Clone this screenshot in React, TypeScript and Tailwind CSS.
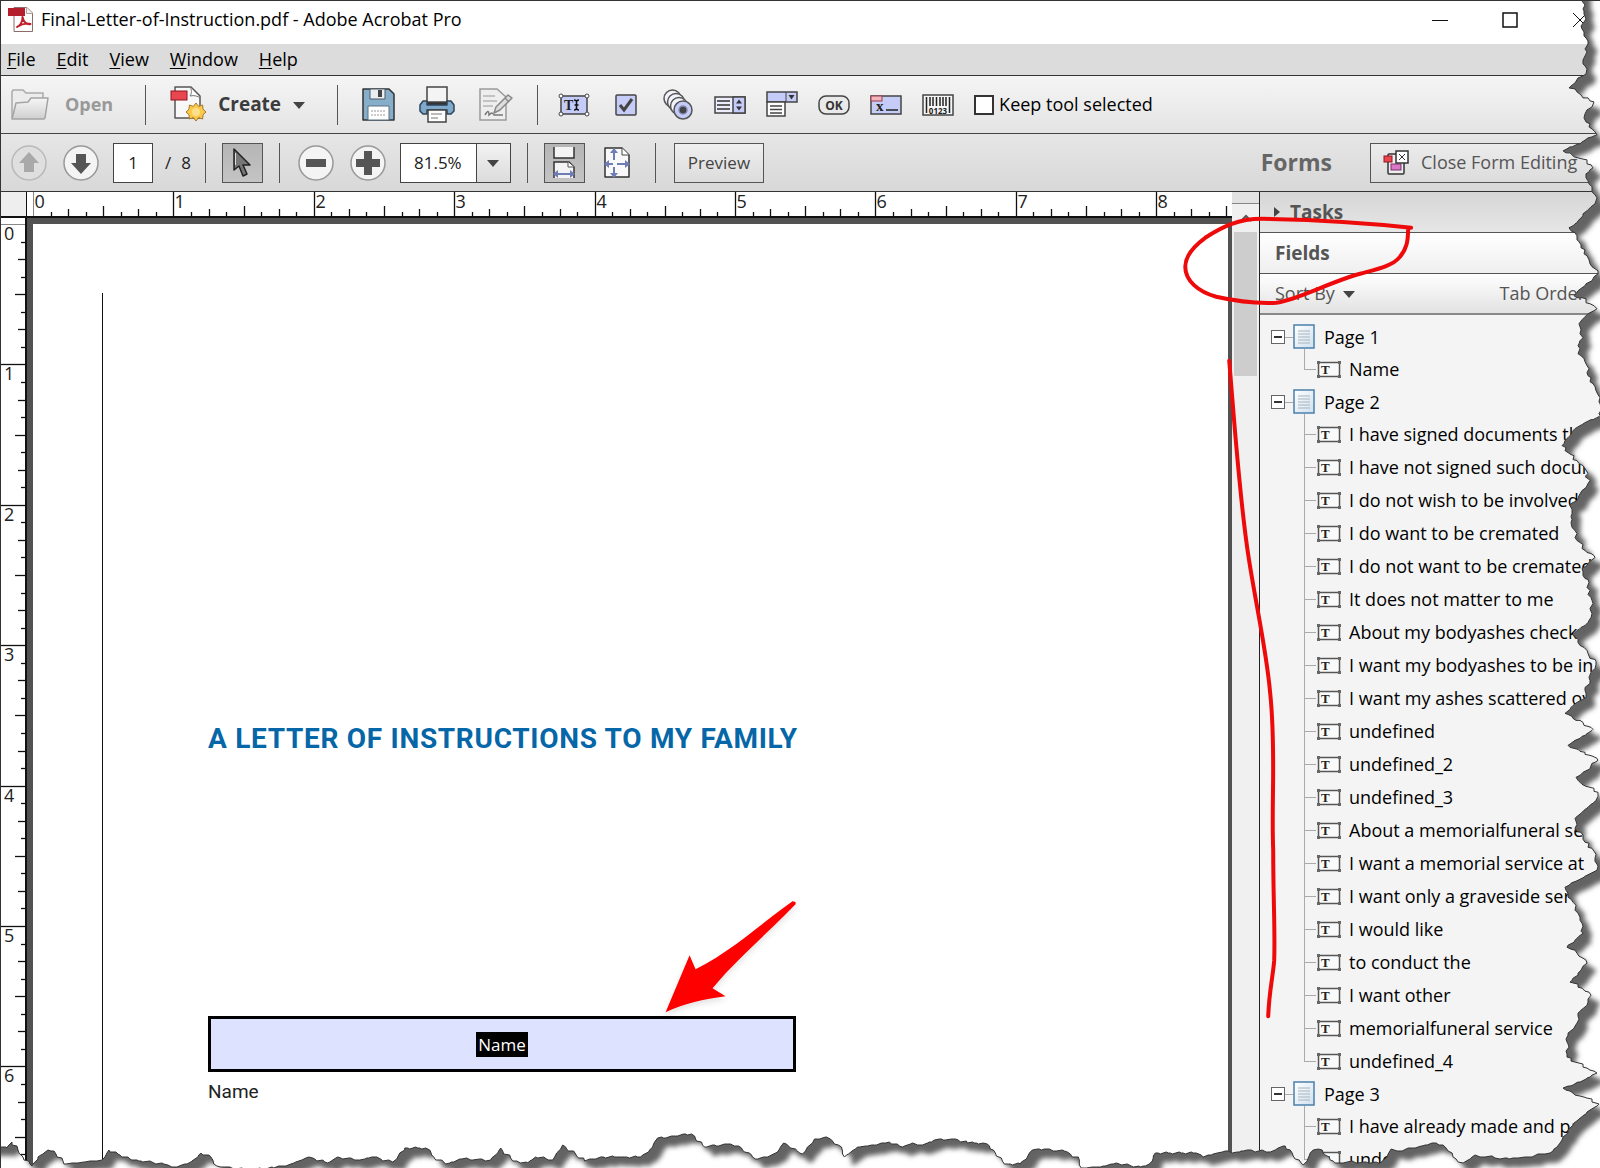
import { useState } from "react";
import type { ReactNode } from "react";

const PAGE_COUNT = 8;
const INCH = 140.4;

const menus = ["File", "Edit", "View", "Window", "Help"];

const fieldTree = [
  { page: "Page 1", fields: ["Name"] },
  {
    page: "Page 2",
    fields: [
      "I have signed documents that",
      "I have not signed such docum",
      "I do not wish to be involved",
      "I do want to be cremated",
      "I do not want to be cremated",
      "It does not matter to me",
      "About my bodyashes check",
      "I want my bodyashes to be in",
      "I want my ashes scattered ov",
      "undefined",
      "undefined_2",
      "undefined_3",
      "About a memorialfuneral ser",
      "I want a memorial service at",
      "I want only a graveside serv",
      "I would like",
      "to conduct the",
      "I want other",
      "memorialfuneral service",
      "undefined_4",
    ],
  },
  { page: "Page 3", fields: ["I have already made and pa", "undefined_5"] },
];

/* ---------- icons ---------- */

function PdfIcon() {
  return (
    <svg width="26" height="27" viewBox="0 0 26 27">
      <path d="M6 1.5h13l5.500 5.500v18.500H6z" fill="#fff" stroke="#8d6b6b" />
      <path d="M18.500 1.500v6h6" fill="#eee" stroke="#b0a0a0" />
      <path d="M0 2h17v8H0z" fill="#b3202c" />
      <path d="M9 21c3-1 6-6 5.500-10 1 5 4 8 8 7-4-1-9 0-13.500 3z" fill="none" stroke="#c11f2b" strokeWidth="2" strokeLinejoin="round" />
    </svg>
  );
}

function FolderIcon() {
  return (
    <svg width="38" height="32" viewBox="0 0 38 32">
      <defs>
        <linearGradient id="folder" x1="0" y1="0" x2="0" y2="1">
          <stop offset="0" stopColor="#f6f6f6" />
          <stop offset="1" stopColor="#cfcfcf" />
        </linearGradient>
      </defs>
      <path d="M1 29V3l1-2h10l3 3h17v6" fill="#ececec" stroke="#aaa" strokeWidth="1.500" />
      <path d="M1 30l4-16 12-1 3-4h17l-3 20-1 1z" fill="url(#folder)" stroke="#a4a4a4" strokeWidth="1.500" strokeLinejoin="round" />
    </svg>
  );
}

function CreateIcon() {
  return (
    <svg width="36" height="37" viewBox="0 0 36 37">
      <path d="M5 1h16l9 9v22H5z" fill="#f8f8f8" stroke="#555" strokeWidth="1.500" strokeLinejoin="round" />
      <path d="M20 1c2 3 2 6 0 9 4-1 8 0 10 2" fill="#fff" stroke="#777" />
      <rect x="1" y="5" width="16" height="9" fill="#e8474f" stroke="#8f1620" />
      <path
        d="M26 17l2.600 3.400 4-1.400.4 4.200 3 2.800-3 2.800-.4 4.200-4-1.400L26 35l-2.600-3.400-4 1.400-.4-4.200L16 26l3-2.800.4-4.200 4 1.400z"
        fill="#fbc94b"
        stroke="#a8781c"
        strokeLinejoin="round"
      />
      <circle cx="26" cy="26" r="4" fill="#fee08a" />
    </svg>
  );
}

function SaveIcon() {
  return (
    <svg width="33" height="33" viewBox="0 0 33 33">
      <path d="M1 1h26l5 5v26H1z" fill="#86aeca" stroke="#333" strokeWidth="1.500" strokeLinejoin="round" />
      <path d="M8 1h15v10H8z" fill="#e9eef2" stroke="#4a5a66" />
      <rect x="16" y="2" width="4" height="7" fill="#444" />
      <path d="M6 18h21v14H6z" fill="#fff" stroke="#5b7283" />
      <path d="M9 23h15M9 27h15" stroke="#999" strokeDasharray="2 1" />
    </svg>
  );
}

function PrintIcon() {
  return (
    <svg width="36" height="37" viewBox="0 0 36 37">
      <path d="M5 15h26v8H5z" fill="#333" />
      <path d="M8 1h20v15H8z" fill="#f4f4f4" stroke="#444" strokeWidth="1.500" />
      <path d="M4 15h4v4h20v-4h4l3 4v6l-3 3h-4v-4H8v4H4l-3-3v-6z" fill="#7fa9cc" stroke="#2f4456" strokeWidth="1.500" strokeLinejoin="round" />
      <path d="M9 24h18v12H9z" fill="#fff" stroke="#444" strokeWidth="1.500" />
      <path d="M12 28h11M12 32h7" stroke="#777" />
    </svg>
  );
}

function SignIcon() {
  return (
    <svg width="34" height="33" viewBox="0 0 34 33" fill="none" stroke="#9a9a9a" strokeWidth="1.500">
      <path d="M1 1h17l9 8v23H1z" fill="#eee" />
      <path d="M4 8h12M4 13h14M4 18h10" stroke="#b5b5b5" />
      <path d="M6 27c3-5 4-4 4 0 3-3 4-2 5 0h9" stroke="#777" />
      <path d="M15 25l2-6L29 7l4 3-12 12z" fill="#ddd" stroke="#888" strokeLinejoin="round" />
      <path d="M26 10l4 4" stroke="#888" />
    </svg>
  );
}

function TextFieldIcon() {
  return (
    <svg width="32" height="24" viewBox="0 0 32 24">
      <rect x="3" y="3" width="26" height="18" fill="#c5ccf8" stroke="#444" strokeWidth="1.500" />
      {[3, 29].map((x) => [3, 21].map((y) => <circle key={`${x}${y}`} cx={x} cy={y} r="2" fill="#fff" stroke="#444" />))}
      <text x="6" y="17" fontSize="14" fontWeight="700" fontFamily="Liberation Serif, serif" fill="#222">T</text>
      <path d="M16 7c2 0 2.500.5 2.500 2v6c0 1.500-.5 2-2.500 2M21 7c-2 0-2.500.5-2.500 2M21 17c-2 0-2.500-.5-2.500-2M16.500 12h4" fill="none" stroke="#111" strokeWidth="1.500" />
    </svg>
  );
}

function CheckFieldIcon() {
  return (
    <svg width="22" height="24" viewBox="0 0 22 24">
      <rect x="1" y="2" width="20" height="20" rx="1" fill="#c5ccf8" stroke="#444" strokeWidth="1.500" />
      <path d="M5 12l4 5 8-11" fill="none" stroke="#444" strokeWidth="3" />
    </svg>
  );
}

function RadioFieldIcon() {
  return (
    <svg width="30" height="31" viewBox="0 0 30 31" stroke="#555" strokeWidth="1.500">
      <circle cx="9.500" cy="9.500" r="8.500" fill="#f1f2fb" />
      <circle cx="13" cy="13" r="8.500" fill="#f1f2fb" />
      <circle cx="16" cy="17" r="8.500" fill="#f1f2fb" />
      <circle cx="20" cy="21" r="9" fill="#c5ccf8" />
      <circle cx="20" cy="21" r="4" fill="#444" stroke="#8389b0" />
    </svg>
  );
}

function ListFieldIcon() {
  return (
    <svg width="32" height="20" viewBox="0 0 32 20">
      <rect x="1" y="2" width="30" height="16" fill="#eceefb" stroke="#444" strokeWidth="1.500" />
      <rect x="19" y="2" width="12" height="16" fill="#c5ccf8" stroke="#444" strokeWidth="1.500" />
      <path d="M3 6h13M3 10h13M3 14h13" stroke="#333" strokeWidth="1.500" />
      <path d="M22 8.500l3-4 3 4zM22 11.500l3 4 3-4z" fill="#333" />
    </svg>
  );
}

function ComboFieldIcon() {
  return (
    <svg width="32" height="27" viewBox="0 0 32 27">
      <rect x="1" y="1" width="30" height="10" fill="#c5ccf8" stroke="#444" strokeWidth="1.500" />
      <path d="M20 1v10" stroke="#444" />
      <path d="M22.500 4h6l-3 4.500z" fill="#333" />
      <path d="M1 11h18v14H1z" fill="#fff" stroke="#444" strokeWidth="1.500" />
      <path d="M4 15h12M4 18.500h12M4 22h12" stroke="#444" strokeWidth="1.500" />
    </svg>
  );
}

function OkFieldIcon() {
  return (
    <svg width="32" height="20" viewBox="0 0 32 20">
      <rect x="1" y="1" width="30" height="18" rx="7" fill="#e9e9e9" stroke="#444" strokeWidth="1.500" />
      <text x="16" y="14.500" textAnchor="middle" fontSize="12" fontWeight="700" fontFamily="Open Sans, sans-serif" fill="#333">OK</text>
    </svg>
  );
}

function SignatureFieldIcon() {
  return (
    <svg width="32" height="20" viewBox="0 0 32 20">
      <rect x="1" y="1" width="30" height="18" fill="#c5ccf8" stroke="#444" strokeWidth="1.500" />
      <rect x="1" y="1" width="11" height="5" fill="#f0b4bd" stroke="#9b3f4c" />
      <text x="6" y="16" fontSize="15" fontWeight="700" fontFamily="Liberation Serif, serif" fill="#222">x</text>
      <path d="M16 15h12" stroke="#222" strokeWidth="1.500" />
    </svg>
  );
}

function BarcodeFieldIcon() {
  return (
    <svg width="32" height="22" viewBox="0 0 32 22">
      <rect x="1" y="1" width="30" height="20" fill="#f6f6f6" stroke="#444" strokeWidth="1.500" />
      <path d="M4.500 3v16M8 3v9M11 3v9M14.500 3v9M18 3v9M21 3v9M24 3v9M27.500 3v16" stroke="#222" strokeWidth="1.500" />
      <text x="16" y="19.500" textAnchor="middle" fontSize="8" fontWeight="700" fontFamily="Open Sans, sans-serif" fill="#222">0123</text>
    </svg>
  );
}

function PointerIcon() {
  return (
    <svg width="20" height="30" viewBox="0 0 20 30">
      <path d="M2 1v21l5-4 4 10 4-2-4-9h7z" fill="#777" stroke="#222" strokeWidth="1.500" strokeLinejoin="round" />
      <path d="M3.500 5v12" stroke="#ddd" />
    </svg>
  );
}

function RoundIcon({ glyph, muted }: { glyph: string; muted?: boolean }) {
  return (
    <svg width="36" height="36" viewBox="0 0 36 36">
      <circle cx="18" cy="18" r="17" fill={muted ? "#dfdfdf" : "#f4f4f4"} stroke={muted ? "#b9b9b9" : "#999"} strokeWidth="1.500" />
      <path d={glyph} fill={muted ? "#a9a9a9" : "#555"} />
    </svg>
  );
}

function FitWidthIcon() {
  return (
    <svg width="26" height="32" viewBox="0 0 26 32">
      <path d="M3 0v11h20V0" fill="#f4f4f4" stroke="#333" strokeWidth="1.500" />
      <path d="M3 31V15h15l5 5v11" fill="#f4f4f4" stroke="#333" strokeWidth="1.500" />
      <path d="M17 15v5h6" fill="#fff" stroke="#555" />
      <path d="M2 27l5-4v3h12v-3l5 4-5 4v-3H7v3z" fill="#6e7db5" />
    </svg>
  );
}

function FitPageIcon() {
  return (
    <svg width="28" height="32" viewBox="0 0 28 32">
      <path d="M2 1h17l7 7v22H2z" fill="#f9f9f9" stroke="#333" strokeWidth="1.500" strokeLinejoin="round" />
      <path d="M19 1v7h7" fill="#fff" stroke="#444" />
      <path d="M11 1l4 5h-3v7h-2V6H7zM11 31l4-5h-3v-6h-2v6H7zM1 17l5-4v3h4v2H6v3zM27 17l-5-4v3h-8v2h8v3z" fill="#6e7db5" />
    </svg>
  );
}

function CloseFormIcon() {
  return (
    <svg width="26" height="25" viewBox="0 0 26 25">
      <rect x="5" y="4" width="16" height="20" rx="1" fill="#eee" stroke="#333" strokeWidth="1.500" />
      <rect x="1" y="6" width="8" height="6" fill="#e8474f" stroke="#8f1620" />
      <rect x="8" y="14" width="10" height="6" fill="#d978c4" stroke="#7d2f6d" />
      <rect x="13" y="1" width="12" height="12" fill="#fff" stroke="#333" strokeWidth="1.500" />
      <path d="M16 4l6 6M22 4l-6 6" stroke="#333" />
    </svg>
  );
}

function PageIcon() {
  return (
    <svg width="22" height="25" viewBox="0 0 22 25" className="shrink-0">
      <defs>
        <linearGradient id="sheet" x1="0" y1="0" x2="1" y2="1">
          <stop offset="0" stopColor="#fff" />
          <stop offset="1" stopColor="#cfe0ef" />
        </linearGradient>
      </defs>
      <rect x="1" y="1" width="20" height="23" fill="url(#sheet)" stroke="#4a80ab" strokeWidth="1.500" />
      <path d="M5 7h12M5 10h12M5 13h12M5 16h12M5 19h12" stroke="#a9b4bd" />
    </svg>
  );
}

function FieldIcon() {
  return (
    <svg width="26" height="19" viewBox="0 0 26 19" className="shrink-0">
      <rect x="2.500" y="2.500" width="21" height="14" fill="#fafafa" stroke="#555" strokeWidth="1.500" />
      <path d="M1 1h3v3H1zM22 1h3v3h-3zM1 15h3v3H1zM22 15h3v3h-3z" fill="#666" />
      <text x="5" y="14" fontSize="13" fontWeight="700" fontFamily="Liberation Serif, serif" fill="#222">T</text>
    </svg>
  );
}

function Caret() {
  return (
    <svg width="12" height="8" viewBox="0 0 12 8" className="shrink-0">
      <path d="M0 1h12L6 8z" fill="#444" />
    </svg>
  );
}

/* ---------- rulers ---------- */

// zero = where the 0 mark sits inside the ruler strip
function Ruler({ vertical, zero, length }: { vertical?: boolean; zero: number; length: number }) {
  const depth = 24;
  const ticks = [];
  for (let i = 0; zero + (i * INCH) / 8 < length; i++) {
    const pos = Math.round(zero + (i * INCH) / 8) + 0.5;
    const size = i % 8 === 0 ? depth : i % 4 === 0 ? 10 : i % 2 === 0 ? 7 : 4;
    ticks.push(
      <path
        key={i}
        d={vertical ? `M${depth} ${pos}h-${size}` : `M${pos} ${depth}v-${size}`}
        stroke={i === 0 ? "#888" : "#111"}
        strokeWidth={i === 0 ? 1 : 1.3}
      />,
    );
    if (i % 8 === 0) {
      ticks.push(
        <text key={`n${i}`} x={vertical ? 3 : pos + 1} y={vertical ? pos + 15 : 16} fontSize="18" fill="#222">
          {i / 8}
        </text>,
      );
    }
  }
  return (
    <svg
      width={vertical ? depth : length}
      height={vertical ? length : depth}
      className="shrink-0 overflow-visible"
    >
      {ticks}
    </svg>
  );
}

/* ---------- torn paper frame ---------- */

const tornRight = [
  [1582, 0], [1585, 4], [1584, 13], [1586, 18], [1581, 25], [1584, 31], [1588, 40], [1585, 48], [1587, 51], [1583, 59], [1587, 68], [1586, 73],
  [1578, 77], [1575, 82], [1569, 87], [1577, 91], [1583, 97], [1588, 97], [1594, 101], [1592, 106], [1587, 109], [1584, 117], [1586, 121], [1592, 128],
  [1597, 134], [1588, 137], [1580, 143], [1570, 146], [1563, 150], [1572, 154], [1582, 158], [1591, 164], [1593, 167], [1586, 173], [1589, 183], [1592, 191],
  [1597, 197], [1595, 203], [1583, 213], [1577, 222], [1569, 227], [1577, 235], [1581, 247], [1587, 255], [1590, 263], [1598, 273], [1593, 278], [1585, 285],
  [1578, 290], [1574, 295], [1582, 297], [1590, 303], [1597, 308], [1588, 313], [1582, 319], [1579, 323], [1580, 333], [1583, 337], [1578, 345], [1578, 353],
  [1585, 361], [1589, 368], [1588, 375], [1593, 383], [1596, 390], [1600, 397], [1600, 415], [1585, 422], [1575, 428], [1568, 437], [1562, 445], [1568, 452],
  [1577, 460], [1585, 468], [1588, 473], [1585, 476], [1590, 480], [1582, 490], [1578, 498], [1570, 505], [1572, 513], [1571, 522], [1575, 530], [1577, 540],
  [1585, 550], [1595, 557], [1588, 563], [1582, 568], [1583, 575], [1589, 582], [1587, 587], [1591, 597], [1591, 617], [1585, 625], [1577, 630], [1573, 634],
  [1578, 642], [1588, 653], [1590, 658], [1596, 661], [1595, 668], [1591, 672], [1590, 680], [1585, 690], [1586, 697], [1577, 702], [1571, 707], [1565, 713],
  [1573, 718], [1583, 722], [1593, 729], [1585, 735], [1575, 740], [1568, 745], [1580, 751], [1590, 755], [1598, 760], [1592, 763], [1590, 768], [1582, 773],
  [1576, 777], [1580, 782], [1590, 787], [1598, 792], [1596, 800], [1588, 807], [1582, 812], [1575, 818], [1575, 828], [1583, 835], [1585, 842], [1592, 848],
  [1595, 858], [1597, 870], [1585, 876], [1573, 882], [1565, 887], [1568, 893], [1573, 902], [1575, 910], [1580, 917], [1583, 933], [1575, 940], [1567, 947],
  [1577, 953], [1587, 963], [1578, 973], [1570, 982], [1582, 988], [1591, 995], [1587, 1005], [1578, 1013], [1577, 1023], [1568, 1035], [1567, 1057], [1575, 1062],
  [1587, 1068], [1597, 1073], [1587, 1078], [1573, 1085], [1563, 1088], [1573, 1093], [1587, 1098], [1599, 1104], [1590, 1110], [1578, 1120], [1568, 1130],
];

const tornBottom = [
  [1562, 1140], [1557, 1147], [1550, 1153], [1540, 1154], [1530, 1157], [1513, 1158], [1500, 1159], [1492, 1156], [1480, 1157], [1475, 1155], [1463, 1163],
  [1453, 1157], [1448, 1151], [1443, 1145], [1432, 1143], [1422, 1146], [1413, 1148], [1397, 1151], [1391, 1149], [1387, 1157], [1380, 1163], [1347, 1162],
  [1340, 1163], [1330, 1160], [1325, 1155], [1318, 1149], [1313, 1150], [1308, 1158], [1303, 1165], [1295, 1159], [1290, 1150], [1285, 1146], [1278, 1148],
  [1270, 1152], [1247, 1150], [1232, 1153], [1228, 1151], [1217, 1153], [1203, 1157], [1201, 1155], [1196, 1153], [1155, 1153], [1149, 1164], [1140, 1167],
  [1116, 1163], [1100, 1167], [1081, 1168], [1079, 1160], [1067, 1152], [1044, 1149], [1032, 1150], [1020, 1164], [1004, 1164], [993, 1150], [983, 1143],
  [967, 1143], [955, 1139], [934, 1140], [922, 1145], [912, 1143], [902, 1147], [889, 1142], [881, 1143], [867, 1146], [857, 1147], [844, 1157], [838, 1145],
  [826, 1137], [814, 1139], [802, 1154], [783, 1143], [777, 1152], [767, 1157], [755, 1159], [738, 1146], [726, 1144], [704, 1147], [691, 1134], [657, 1138],
  [649, 1150], [640, 1157], [620, 1157], [600, 1157], [584, 1161], [562, 1145], [552, 1160], [535, 1157], [527, 1163], [512, 1161], [500, 1148], [490, 1160],
  [461, 1159], [445, 1164], [433, 1157], [425, 1148], [404, 1148], [392, 1162], [371, 1157], [359, 1160], [337, 1157], [327, 1163], [308, 1157], [290, 1164],
  [273, 1168], [245, 1170], [224, 1167], [216, 1166], [210, 1157], [200, 1153], [190, 1162], [176, 1167], [163, 1164], [131, 1160], [108, 1150], [101, 1160],
  [84, 1162], [63, 1164], [53, 1151], [47, 1150], [37, 1157], [31, 1166], [20, 1155], [11, 1142], [6, 1148], [0, 1147],
];

// breaks every long run into short uneven steps so the edge looks ripped
function ripped(points: number[][]) {
  const out: string[] = [];
  points.forEach(([x, y], i) => {
    out.push(`${x} ${y}`);
    const next = points[i + 1];
    if (!next) return;
    const steps = Math.floor(Math.hypot(next[0] - x, next[1] - y) / 3);
    for (let s = 1; s < steps; s++) {
      const t = s / steps;
      const nudge = ((i * 7 + s * 5) % 4) - 1.5;
      out.push(`${Math.round(x + (next[0] - x) * t + nudge)} ${Math.round(y + (next[1] - y) * t - nudge / 2)}`);
    }
  });
  return out.join("L");
}

const tornEdge = ripped([...tornRight, ...tornBottom]);
const paper = `M0 -20L1582 -20L${tornEdge}L-20 1147L-20 -20Z`;

function TornFrame() {
  return (
    <svg
      viewBox="0 0 1600 1168"
      preserveAspectRatio="none"
      className="pointer-events-none absolute inset-0 z-20 h-full w-full"
      aria-hidden="true"
    >
      <defs>
        <clipPath id="outside">
          <path d={`M-40 -40H1640V1200H-40Z${paper}`} clipRule="evenodd" />
        </clipPath>
        <filter id="soften" x="-5%" y="-5%" width="110%" height="110%">
          <feGaussianBlur stdDeviation="2.500" />
        </filter>
      </defs>
      <g clipPath="url(#outside)">
        <path d="M-40 -40H1640V1200H-40Z" fill="#fff" />
        <path d={paper} fill="#646464" filter="url(#soften)" transform="translate(9 9)" />
      </g>
      <path d={`M${tornEdge}`} fill="none" stroke="#333" />
    </svg>
  );
}

function Annotations() {
  return (
    <svg
      viewBox="0 0 1600 1168"
      preserveAspectRatio="none"
      className="pointer-events-none absolute inset-0 z-10 h-full w-full"
      aria-hidden="true"
    >
      <g fill="none" stroke="#ee0a0a" strokeWidth="4" strokeLinecap="round" strokeLinejoin="round">
        <path d="M1411 227C1375 223 1325 219 1262 218C1238 218 1222 226 1205 237C1190 248 1185 257 1185 266C1185 280 1198 291 1216 296C1238 301 1256 303 1276 302C1298 299 1330 281 1360 273C1378 268 1392 265 1399 257C1407 248 1408 240 1408 227" />
        <path d="M1229 360C1234 420 1238 480 1246 540C1252 588 1266 645 1270 693C1276 750 1271 800 1273 850C1273 900 1275 930 1274 960C1273 975 1269 990 1268 1016" />
      </g>
      <path
        d="M665 1012L689 955L695 969C730 952 762 922 792 901Q796 901 795 904C765 935 735 960 712 988L725 996C702 999 685 1003 665 1012Z"
        fill="#f00"
        className="drop-shadow-md"
      />
    </svg>
  );
}

/* ---------- small parts ---------- */

function Divider() {
  return <span className="h-10 w-px shrink-0 bg-[#555]" />;
}

function ToolButton({ label, children }: { label: string; children: ReactNode }) {
  return (
    <button type="button" aria-label={label} className="flex min-w-8 shrink-0 items-center justify-center">
      {children}
    </button>
  );
}

function FieldTree() {
  return (
    <ul className="pt-[6px] text-[18px] whitespace-nowrap text-black">
      {fieldTree.map((node) => (
        <li key={node.page}>
          <div className="flex h-8 items-center pl-[11px]">
            <button
              type="button"
              aria-label={`Collapse ${node.page}`}
              className="flex size-[14px] items-center justify-center border border-[#666] bg-white"
            >
              <span className="h-[2px] w-2 bg-[#333]" />
            </button>
            <span className="h-px w-2 bg-[#aaa]" />
            <span className="flex h-8 flex-col items-center pt-[3px]">
              <PageIcon />
              <span className="w-px flex-1 bg-[#aaa]" />
            </span>
            <span className="ml-[9px]">{node.page}</span>
          </div>
          <ul>
            {node.fields.map((field, i) => (
              <li key={field} className="flex h-[33px] items-center pl-[44px]">
                <span className="flex h-full w-3 shrink-0 flex-col">
                  <span className="flex-1 border-b border-l border-[#aaa]" />
                  <span className={i === node.fields.length - 1 ? "flex-1" : "flex-1 border-l border-[#aaa]"} />
                </span>
                <FieldIcon />
                <span className="ml-[7px]">{field}</span>
              </li>
            ))}
          </ul>
        </li>
      ))}
    </ul>
  );
}

export default function App() {
  const [page, setPage] = useState("1");
  const [zoom, setZoom] = useState("81.5%");
  const [keepTool, setKeepTool] = useState(false);

  return (
    <div className="relative flex h-screen flex-col overflow-hidden border-t border-l border-[#333] bg-white font-['Open_Sans',sans-serif] text-[#222]">
      <header className="flex h-[43px] shrink-0 items-center pb-[6px] pl-[7px] text-[18px] text-black">
        <PdfIcon />
        <h1 className="ml-[7px]">Final-Letter-of-Instruction.pdf - Adobe Acrobat Pro</h1>
        <div className="ml-auto flex items-center gap-[38px] pr-1">
          <ToolButton label="Minimize">
            <svg width="16" height="16"><path d="M0 8.500h16" stroke="#111" /></svg>
          </ToolButton>
          <ToolButton label="Maximize">
            <svg width="16" height="16"><path d="M1 1h14v14H1z" fill="none" stroke="#111" strokeWidth="1.500" /></svg>
          </ToolButton>
          <ToolButton label="Close">
            <svg width="16" height="16"><path d="M1 1l14 14M15 1L1 15" stroke="#111" /></svg>
          </ToolButton>
        </div>
      </header>

      <nav className="flex h-8 shrink-0 items-center gap-[21px] border-b border-[#333] bg-[#dcdcdc] pl-[6px] text-[18px] text-black">
        {menus.map((menu) => (
          <button key={menu} type="button">
            <span className="underline underline-offset-2">{menu[0]}</span>
            {menu.slice(1)}
          </button>
        ))}
      </nav>

      <div className="flex h-[58px] shrink-0 items-center border-b border-[#444] bg-linear-to-b from-[#f5f5f5] to-[#e4e4e4] pl-[10px]">
        <button type="button" disabled className="flex items-center gap-4 text-[18px] font-bold text-[#999]">
          <FolderIcon />
          Open
        </button>
        <div className="ml-8 flex items-center gap-6">
          <Divider />
          <button type="button" className="flex items-center gap-3 text-[19px] font-bold text-[#3c3c3c]">
            <CreateIcon />
            Create
            <Caret />
          </button>
        </div>
        <div className="ml-8 flex items-center gap-6">
          <Divider />
          <ToolButton label="Save"><SaveIcon /></ToolButton>
          <ToolButton label="Print"><PrintIcon /></ToolButton>
          <ToolButton label="Sign"><SignIcon /></ToolButton>
        </div>
        <div className="ml-6 flex items-center gap-5">
          <Divider />
          <ToolButton label="Text field"><TextFieldIcon /></ToolButton>
          <ToolButton label="Check box"><CheckFieldIcon /></ToolButton>
          <ToolButton label="Radio button"><RadioFieldIcon /></ToolButton>
          <ToolButton label="List box"><ListFieldIcon /></ToolButton>
          <ToolButton label="Dropdown"><ComboFieldIcon /></ToolButton>
          <ToolButton label="Button"><OkFieldIcon /></ToolButton>
          <ToolButton label="Signature"><SignatureFieldIcon /></ToolButton>
          <ToolButton label="Barcode"><BarcodeFieldIcon /></ToolButton>
        </div>
        <label className="ml-5 flex items-center gap-[5px] text-[18px] whitespace-nowrap text-black">
          <input
            type="checkbox"
            checked={keepTool}
            onChange={(e) => setKeepTool(e.target.checked)}
            className="size-5 appearance-none border-2 border-[#333] bg-white checked:bg-[#555]"
          />
          Keep tool selected
        </label>
      </div>

      <div className="flex h-[58px] shrink-0 items-center border-b border-[#333] bg-linear-to-b from-[#e6e6e6] to-[#d8d8d8] pl-[10px] text-[17px]">
        <div className="flex items-center gap-4">
          <ToolButton label="Previous page"><RoundIcon muted glyph="M18 7l10 11h-5v9H13v-9H8z" /></ToolButton>
          <ToolButton label="Next page"><RoundIcon glyph="M18 29L8 18h5V9h10v9h5z" /></ToolButton>
        </div>
        <label className="ml-[14px] flex items-center gap-3">
          <input
            type="text"
            aria-label="Page number"
            value={page}
            onChange={(e) => setPage(e.target.value)}
            className="h-10 w-10 border border-[#444] bg-white text-center"
          />
          <span className="flex gap-[10px]">
            <span>/</span>
            <span>{PAGE_COUNT}</span>
          </span>
        </label>
        <div className="ml-[14px] flex items-center gap-4">
          <Divider />
          <button
            type="button"
            aria-label="Select"
            className="flex h-10 w-[41px] items-center justify-center border border-[#555] bg-linear-to-b from-[#b5b5b5] to-[#c4c4c4]"
          >
            <PointerIcon />
          </button>
          <Divider />
        </div>
        <div className="ml-[18px] flex items-center gap-4">
          <ToolButton label="Zoom out"><RoundIcon glyph="M8 14h20v8H8z" /></ToolButton>
          <ToolButton label="Zoom in"><RoundIcon glyph="M14 6h8v8h8v8h-8v8h-8v-8H6v-8h8z" /></ToolButton>
        </div>
        <div className="relative ml-[14px] h-10 w-[111px]">
          <select
            aria-label="Zoom level"
            value={zoom}
            onChange={(e) => setZoom(e.target.value)}
            className="h-full w-full appearance-none border border-[#444] bg-white pl-[13px]"
          >
            <option>81.5%</option>
            <option>100%</option>
            <option>125%</option>
          </select>
          <span className="pointer-events-none absolute inset-y-px right-px flex w-[34px] items-center justify-center border-l border-[#444] bg-linear-to-b from-[#f2f2f2] to-[#dcdcdc]">
            <Caret />
          </span>
        </div>
        <div className="ml-4 flex items-center gap-4">
          <Divider />
          <button
            type="button"
            aria-label="Fit width"
            className="flex h-10 w-[41px] items-center justify-center border border-[#555] bg-linear-to-b from-[#b5b5b5] to-[#c4c4c4]"
          >
            <FitWidthIcon />
          </button>
          <ToolButton label="Fit page"><FitPageIcon /></ToolButton>
        </div>
        <div className="ml-[22px] flex items-center gap-[18px]">
          <Divider />
          <button type="button" className="h-10 w-[90px] border border-[#555] bg-linear-to-b from-[#efefef] to-[#dcdcdc] text-[#444]">
            Preview
          </button>
        </div>
        <div className="ml-auto flex items-center gap-[38px] pr-1">
          <span className="text-[23px] font-bold text-[#666]">Forms</span>
          <button
            type="button"
            className="flex h-10 w-[226px] items-center gap-3 border border-[#555] bg-linear-to-b from-[#ececec] to-[#dcdcdc] pl-3 text-[18px] whitespace-nowrap text-[#555]"
          >
            <CloseFormIcon />
            Close Form Editing
          </button>
        </div>
      </div>

      <main className="flex min-h-0 flex-1">
        <section className="flex min-w-0 flex-1 flex-col">
          <div className="flex shrink-0 border-b-2 border-[#111]">
            <span className="h-6 w-[26px] shrink-0 border-r border-[#111] bg-[#eee]" />
            <Ruler zero={6} length={1206} />
          </div>
          <div className="flex min-h-0 flex-1 overflow-hidden">
            <div className="shrink-0 border-r-2 border-[#111]">
              <Ruler vertical zero={6} length={950} />
            </div>
            <div className="flex flex-1 bg-[#525252] pt-[6px] pr-1 pl-[6px]">
              <article className="flex-1 bg-white pt-[69px] pl-[69px]">
                <div className="h-full border-l border-[#111] pt-[425px] pl-[105px]">
                  <h2 className="font-['Roboto',sans-serif] text-[28px] leading-[42px] font-bold tracking-wide whitespace-nowrap text-[#0566a8]">
                    A LETTER OF INSTRUCTIONS TO MY FAMILY
                  </h2>
                  <div className="mt-[256px] flex h-[56px] w-[588px] items-center justify-center border-3 border-black bg-[#dde3ff]">
                    <span className="bg-black px-[2px] text-[17px] leading-[25px] text-white">Name</span>
                  </div>
                  <p className="mt-2 font-['Roboto',sans-serif] text-[19px] leading-6">Name</p>
                </div>
              </article>
            </div>
          </div>
        </section>

        <div className="flex w-[27px] shrink-0 flex-col items-center bg-[#f0f0f0]">
          <div className="h-3 w-full border-b border-[#888] bg-[#e2e2e2]" />
          <button type="button" aria-label="Scroll up" className="flex h-7 w-full items-center justify-center">
            <svg width="12" height="8"><path d="M1 7l5-5 5 5" fill="none" stroke="#555" strokeWidth="2" /></svg>
          </button>
          <div className="h-36 w-[23px] bg-[#cdcdcd]" />
        </div>

        <aside className="flex w-[341px] shrink-0 flex-col overflow-hidden border-l border-[#222] bg-[#f4f4f4] text-[#555]">
          <button
            type="button"
            className="flex h-[41px] shrink-0 items-center gap-[10px] border-b border-[#555] bg-linear-to-b from-[#d6d6d6] to-[#e6e6e6] pl-[14px] text-[19px] font-bold"
          >
            <svg width="6" height="10"><path d="M0 0l6 5-6 5z" fill="#444" /></svg>
            Tasks
          </button>
          <h2 className="flex h-[41px] shrink-0 items-center border-b border-[#555] bg-linear-to-b from-white to-[#efefef] pl-[15px] text-[19px] font-bold">
            Fields
          </h2>
          <div className="flex h-[41px] shrink-0 items-center justify-between border-b-2 border-[#888] bg-linear-to-b from-white to-[#e2e2e2] pr-[15px] pl-[15px] text-[18px]">
            <button type="button" className="flex items-center gap-2">
              Sort By
              <Caret />
            </button>
            <button type="button">Tab Order</button>
          </div>
          <FieldTree />
        </aside>
      </main>

      <Annotations />
      <TornFrame />
    </div>
  );
}
